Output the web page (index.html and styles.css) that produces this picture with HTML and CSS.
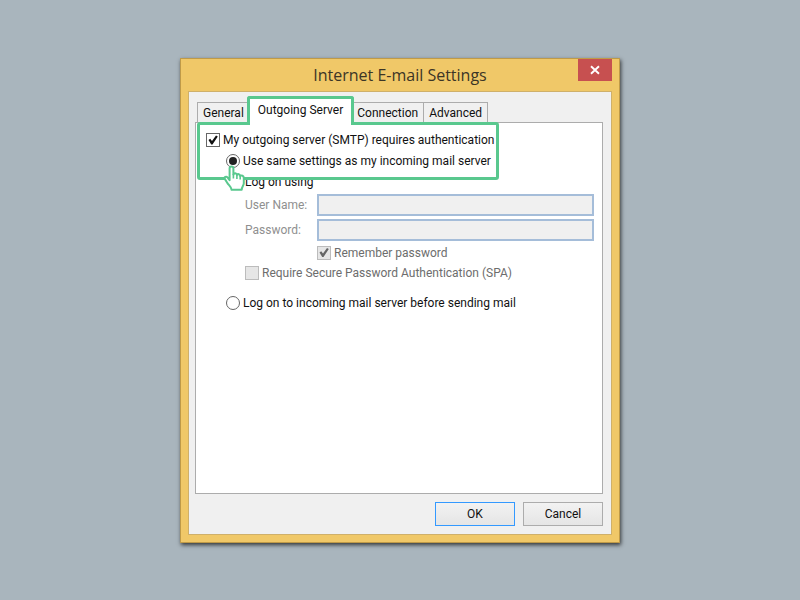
FILE: index.html
```html
<!DOCTYPE html>
<html lang="en">
<head>
    <meta charset="UTF-8">
    <meta name="viewport" content="width=device-width, initial-scale=1.0">
    <title>Internet E-mail Settings</title>
    <link rel="stylesheet" href="styles.css">
</head>
<body>
    <div class="window">
        <header class="titlebar">
            <h1>Internet E-mail Settings</h1>
            <button type="button" class="close-btn" aria-label="Close">
                <svg width="10" height="10" viewBox="0 0 10 10"><path d="M1 1.2 L9 8.8 M9 1.2 L1 8.8" stroke="#fff" stroke-width="1.9"/></svg>
            </button>
        </header>

        <form class="client">
            <div class="tabs" role="tablist">
                <button type="button" class="tab" role="tab">General</button>
                <button type="button" class="tab active" role="tab" aria-selected="true">Outgoing Server</button>
                <button type="button" class="tab" role="tab">Connection</button>
                <button type="button" class="tab" role="tab">Advanced</button>
            </div>

            <div class="panel" role="tabpanel">
                <div class="highlight">
                    <div class="row">
                        <input type="checkbox" id="smtpAuth" checked>
                        <label for="smtpAuth">My outgoing server (SMTP) requires authentication</label>
                    </div>
                    <div class="row indent">
                        <input type="radio" name="auth" id="sameSettings" checked>
                        <label for="sameSettings">Use same settings as my incoming mail server</label>
                    </div>
                    <svg class="pointer" width="24" height="27" viewBox="0 0 24 27">
                        <path d="M6.6 15.2 V3.6 C6.6 .7 10.4 .7 10.4 3.6 V9.6 C11 7.7 13.6 7.9 13.9 9.9 C14.8 8.6 17 9 17.2 10.9 C18.6 10 20.8 10.7 20.8 12.9 V18.2 C20.8 20.6 18.9 21.6 18.7 24.8 H8.6 C8.1 21.4 5.6 20.3 4.2 17.7 L1.8 13.9 C.9 12.1 3.2 11 4.5 12.4 Z" fill="#fff" stroke="#59c88e" stroke-width="2" stroke-linejoin="round"/>
                        <path d="M10.4 9 V13.6 M13.9 9.8 V14 M17.2 10.8 V14.6" fill="none" stroke="#59c88e" stroke-width="1.6"/>
                    </svg>
                </div>

                <p class="group-title">Log on using</p>
                <div class="field disabled">
                    <label for="username">User Name:</label>
                    <input type="text" id="username" disabled>
                </div>
                <div class="field disabled">
                    <label for="password">Password:</label>
                    <input type="password" id="password" disabled>
                </div>
                <div class="row remember disabled">
                    <input type="checkbox" id="remember" checked disabled>
                    <label for="remember">Remember password</label>
                </div>
                <div class="row spa disabled">
                    <input type="checkbox" id="spa" disabled>
                    <label for="spa">Require Secure Password Authentication (SPA)</label>
                </div>
                <div class="row incoming">
                    <input type="radio" name="auth" id="incoming">
                    <label for="incoming">Log on to incoming mail server before sending mail</label>
                </div>
            </div>

            <div class="buttons">
                <button type="submit" class="btn default">OK</button>
                <button type="button" class="btn">Cancel</button>
            </div>
        </form>
    </div>
</body>
</html>
```
FILE: styles.css
```css
* {
    box-sizing: border-box;
}

body {
    margin: 0;
    min-height: 100vh;
    display: flex;
    align-items: center;
    justify-content: center;
    background-color: #a9b5bd;
    font-family: Roboto, Tahoma, sans-serif;
    font-size: 12px;
    line-height: 16px;
    color: #111;
}

button, input {
    font: inherit;
    color: inherit;
    margin: 0;
}

.window {
    width: 55%;
    min-width: 440px;
    padding: 0 7px 7px;
    background-color: #f0c868;
    border: 1px solid #bf9a48;
    box-shadow: 1px 2px 4px rgba(0, 0, 0, 0.7);
}

.titlebar {
    position: relative;
    height: 32px;
}

.titlebar h1 {
    margin: 0;
    font-family: "Open Sans", "Noto Sans", sans-serif;
    font-size: 16px;
    font-weight: normal;
    line-height: 32px;
    text-align: center;
    color: #3c3526;
}

.close-btn {
    position: absolute;
    top: 0;
    right: 0;
    width: 34px;
    height: 22px;
    padding: 0;
    border: none;
    background-color: #c75050;
}

.close-btn svg {
    display: block;
    margin: auto;
}

.client {
    padding: 4px 8px 8px 6px;
    background-color: #f0f0f0;
    border: 1px solid #cfb06a;
}

.tabs {
    display: flex;
    align-items: flex-end;
    padding-left: 2px;
}

.tab {
    height: 20px;
    padding: 0 5px;
    border: 1px solid #acacac;
    border-bottom: none;
    background-color: #f0f0f0;
    line-height: 20px;
    white-space: nowrap;
}

.tab + .tab {
    border-left: none;
}

/* active tab opens into the highlighted group below it */
.tab.active {
    position: relative;
    z-index: 2;
    height: 29px;
    margin: 0 -2px -3px -3px;
    padding: 0 8px 3px;
    border: 3px solid #59c88e;
    border-bottom: none;
    border-radius: 3px 3px 0 0;
    background-color: #fff;
}

.panel {
    min-height: 372px;
    padding: 0 8px 8px 1px;
    background-color: #fff;
    border: 1px solid #acacac;
}

.highlight {
    position: relative;
    width: fit-content;
    height: 58px;
    margin-top: -1px;
    padding: 5px 2px 0 6px;
    border: 3px solid #59c88e;
    border-radius: 3px;
}

.highlight .row {
    height: 21px;
}

.pointer {
    position: absolute;
    left: 23px;
    top: 40px;
}

.row {
    display: flex;
    align-items: center;
    gap: 3px;
    height: 20px;
    white-space: nowrap;
}

.indent {
    margin-left: 20px;
}

.group-title {
    margin: -6px 0 4px 48px;
}

.field {
    display: flex;
    align-items: center;
    height: 22px;
    margin: 0 0 3px 48px;
}

.field label {
    width: 72px;
}

.field input {
    flex: 1;
    min-width: 0;
    height: 22px;
    background-color: #f0f0f0;
    border: 2px solid #a5bdd9;
}

.disabled {
    color: #6d6d6d;
}

.field.disabled {
    color: #8f8f8f;
}

.remember {
    margin: -1px 0 0 120px;
}

.spa {
    margin-left: 48px;
}

.incoming {
    margin: 10px 0 0 29px;
}

input[type="checkbox"], input[type="radio"] {
    appearance: none;
    position: relative;
    flex: none;
    width: 14px;
    height: 14px;
    background-color: #fff;
    border: 1px solid #666;
}

input[type="radio"] {
    border-radius: 50%;
}

input[type="checkbox"]:checked::after {
    content: "";
    position: absolute;
    inset: 1px;
    background-color: #111;
    clip-path: polygon(5% 50%, 22% 38%, 40% 60%, 80% 5%, 98% 15%, 45% 95%, 32% 95%);
}

input[type="radio"]:checked::after {
    content: "";
    position: absolute;
    inset: 2px;
    border-radius: 50%;
    background-color: #222;
}

input[type="checkbox"]:disabled {
    background-color: #e6e6e6;
    border-color: #bcbcbc;
}

input[type="checkbox"]:disabled::after {
    background-color: #666;
}

.buttons {
    display: flex;
    justify-content: flex-end;
    gap: 8px;
    padding-top: 8px;
}

.btn {
    width: 80px;
    height: 24px;
    padding: 0;
    border: 1px solid #acacac;
    background: linear-gradient(#f2f2f2, #e5e5e5);
}

.btn.default {
    border-color: #3399ff;
}
```
